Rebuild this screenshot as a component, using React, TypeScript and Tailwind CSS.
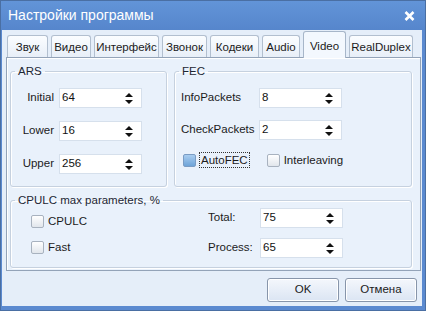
import React from "react";

const tabs = [
  { label: "Звук", w: "w-[41px]" },
  { label: "Видео", w: "w-[40px]" },
  { label: "Интерфейс", w: "w-[65px]" },
  { label: "Звонок", w: "w-[45px]" },
  { label: "Кодеки", w: "w-[49px]" },
  { label: "Audio", w: "w-[38px]" },
  { label: "Video", w: "w-[43px]", active: true },
  { label: "RealDuplex", w: "w-[64px]" },
];

function Spin({ value }: { value: string }) {
  return (
    <div className="flex h-[20px] w-[83px] items-center justify-between border border-[#d6e0ec] bg-white pl-[2px] pr-[8px] text-[11.5px] text-[#111]">
      <span>{value}</span>
      <svg width="8" height="13" viewBox="0 0 8 13">
        <path d="M4 1 L8 5 L0 5 Z" fill="#111" />
        <path d="M0 8 L8 8 L4 12 Z" fill="#111" />
      </svg>
    </div>
  );
}

function Check({ label, checked, focus }: { label: string; checked?: boolean; focus?: boolean }) {
  return (
    <div className="flex items-center gap-[3px]">
      <div
        className={
          checked
            ? "h-[13px] w-[13px] rounded-[2px] border border-[#7a9cc4] bg-gradient-to-b from-[#a9cdf0] to-[#6ea4d8]"
            : "h-[13px] w-[13px] rounded-[2px] border border-[#a8b2bf] bg-gradient-to-b from-[#ffffff] to-[#e1e6ec]"
        }
      />
      <span
        className={
          focus
            ? "border border-dotted border-[#333] px-[1px] leading-[14px]"
            : "px-[1px] leading-[14px]"
        }
      >
        {label}
      </span>
    </div>
  );
}

function Group({ title, className, children }: { title: string; className: string; children: React.ReactNode }) {
  return (
    <fieldset
      className={
        "rounded-[3px] border border-[#c6d1df] shadow-[inset_1px_1px_0_#ffffff,1px_1px_0_#ffffff] " +
        className
      }
    >
      <legend className="ml-[4px] px-[3px] text-[11.5px] leading-[12px] text-[#1d2633]">{title}</legend>
      {children}
    </fieldset>
  );
}

export default function App() {
  return (
    <div
      className="flex h-[311px] w-[426px] flex-col border border-[#4a6fa3] bg-[#5b8ad0] text-[11.5px] text-[#1b1b1b]"
      style={{ fontFamily: '"Liberation Sans", Arial, sans-serif' }}
    >
      {/* title bar */}
      <div className="flex h-[29px] shrink-0 items-center justify-between pl-[7px] pr-[10px] bg-gradient-to-b from-[#6294d8] to-[#5686cc]">
        <span className="text-[14px] text-white">Настройки программы</span>
        <svg width="11" height="10" viewBox="0 0 11 10">
          <path d="M1.5 1 L9.5 9 M9.5 1 L1.5 9" stroke="#fff" strokeWidth="2.6" />
        </svg>
      </div>

      {/* body */}
      <div className="mb-[4px] ml-[1px] mr-[3px] flex flex-1 flex-col bg-[#e5eef9] px-[4px]">
        {/* tabs */}
        <div className="flex h-[27px] items-end gap-[3px] pl-[1px]">
          {tabs.map((t) =>
            t.active ? (
              <div
                key={t.label}
                className={
                  t.w +
                  " relative z-10 -mb-px flex h-[27px] items-start justify-center rounded-t-[3px] border border-b-0 border-[#a7b6c9] bg-[#f3f8fe] pt-[6px]"
                }
              >
                {t.label}
              </div>
            ) : (
              <div
                key={t.label}
                className={
                  t.w +
                  " flex h-[22px] items-center justify-center rounded-t-[3px] border border-b-0 border-[#b2bfcf] bg-gradient-to-b from-[#fbfdff] to-[#e8eff8] pt-[2px]"
                }
              >
                {t.label}
              </div>
            )
          )}
        </div>

        {/* panel */}
        <div className="flex h-[214px] w-[415px] flex-col gap-[7px] border border-[#93a3b8] bg-[#e9f1fb] px-[3px] pt-[7px] shadow-[inset_1px_1px_0_#ffffff]">
          <div className="flex gap-[7px]">
            <Group title="ARS" className="h-[122px] w-[157px]">
              <div className="flex flex-col gap-[13px] pt-[11px]">
                {[
                  ["Initial", "64"],
                  ["Lower", "16"],
                  ["Upper", "256"],
                ].map(([l, v]) => (
                  <div key={l} className="flex items-center">
                    <span className="w-[48px] pr-[5px] text-right">{l}</span>
                    <Spin value={v} />
                  </div>
                ))}
              </div>
            </Group>
            <Group title="FEC" className="h-[122px] w-[238px]">
              <div className="flex flex-col gap-[12px] pl-[6px] pt-[11px]">
                {[
                  ["InfoPackets", "8"],
                  ["CheckPackets", "2"],
                ].map(([l, v]) => (
                  <div key={l} className="flex items-center">
                    <span className="w-[78px]">{l}</span>
                    <Spin value={v} />
                  </div>
                ))}
                <div className="flex items-center gap-[17px] pl-[2px]">
                  <Check label="AutoFEC" checked focus />
                  <Check label="Interleaving" />
                </div>
              </div>
            </Group>
          </div>
          <Group title="CPULC max parameters, %" className="h-[74px] w-[402px]">
            <div className="flex">
              <div className="flex flex-col gap-[12px] pl-[20px] pt-[8px]">
                <Check label="CPULC" />
                <Check label="Fast" />
              </div>
              <div className="ml-auto mr-[68px] flex flex-col gap-[10px] pt-[2px]">
                {[
                  ["Total:", "75"],
                  ["Process:", "65"],
                ].map(([l, v]) => (
                  <div key={l} className="flex items-center">
                    <span className="w-[52px]">{l}</span>
                    <Spin value={v} />
                  </div>
                ))}
              </div>
            </div>
          </Group>
        </div>

        {/* buttons */}
        <div className="flex justify-end gap-[6px] pr-[1px] pt-[7px]">
          {["OK", "Отмена"].map((b) => (
            <button
              key={b}
              className="h-[24px] w-[72px] rounded-[3px] border border-[#8795aa] bg-gradient-to-b from-[#f4f7fc] to-[#dbe5f3] text-[11.5px] text-[#1b1b1b] shadow-[inset_0_0_0_1px_#ffffff]"
            >
              {b}
            </button>
          ))}
        </div>
      </div>
    </div>
  );
}
